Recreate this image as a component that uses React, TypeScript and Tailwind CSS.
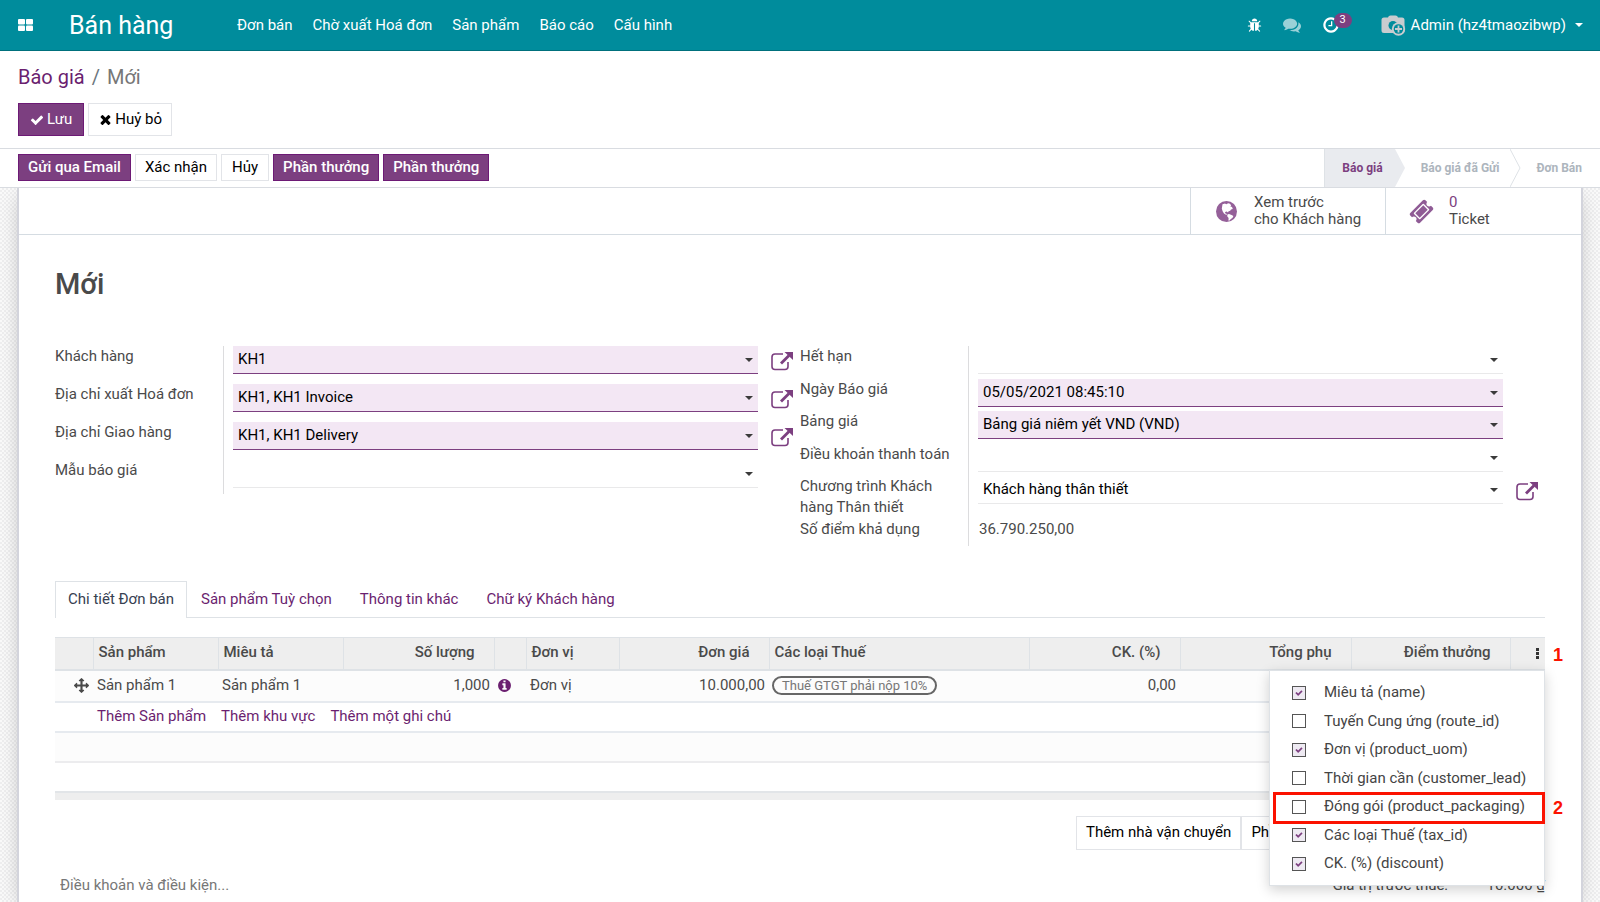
import React from "react";

const ICONS = {
  check:
    "M1671 566q0 40-28 68l-724 724-136 136q-28 28-68 28t-68-28l-136-136-362-362q-28-28-28-68t28-68l136-136q28-28 68-28t68 28l294 295 656-657q28-28 68-28t68 28l136 136q28 28 28 68z",
  times:
    "M1490 1322q0 40-28 68l-136 136q-28 28-68 28t-68-28l-294-294-294 294q-28 28-68 28t-68-28l-136-136q-28-28-28-68t28-68l294-294-294-294q-28-28-28-68t28-68l136-136q28-28 68-28t68 28l294 294 294-294q28-28 68-28t68 28l136 136q28 28 28 68t-28 68l-294 294 294 294q28 28 28 68z",
  info: "M1152 1376v-160q0-14-9-23t-23-9h-96v-512q0-14-9-23t-23-9h-320q-14 0-23 9t-9 23v160q0 14 9 23t23 9h96v320h-96q-14 0-23 9t-9 23v160q0 14 9 23t23 9h448q14 0 23-9t9-23zm-128-896v-160q0-14-9-23t-23-9h-192q-14 0-23 9t-9 23v160q0 14 9 23t23 9h192q14 0 23-9t9-23zm640 416q0 209-103 385.5t-279.5 279.5-385.5 103-385.5-103-279.5-279.5-103-385.5 103-385.5 279.5-279.5 385.5-103 385.5 103 279.5 279.5 103 385.5z",
  clock:
    "M1024 544v448q0 14-9 23t-23 9h-320q-14 0-23-9t-9-23v-64q0-14 9-23t23-9h224v-352q0-14 9-23t23-9h64q14 0 23 9t9 23zm416 352q0-148-73-273t-198-198-273-73-273 73-198 198-73 273 73 273 198 198 273 73 273-73 198-198 73-273zm224 0q0 209-103 385.5t-279.5 279.5-385.5 103-385.5-103-279.5-279.5-103-385.5 103-385.5 279.5-279.5 385.5-103 385.5 103 279.5 279.5 103 385.5z",
  comments:
    "M1408 768q0 139-94 257t-256.5 186.5-353.5 68.5q-86 0-176-16-124 88-278 128-36 9-86 16h-3q-11 0-20.5-8t-11.5-21q-1-3-1-6.5t.5-6.5 2-6l2.5-5 3.5-5.5 4-5 4.5-5 4-4.5q5-6 23-25t26-29.5 22.5-29 25-38.5 20.5-44q-124-72-195-177t-71-224q0-139 94-257t256.500-186.500 353.500-68.500 353.500 68.500 256.500 186.500 94 257zm384 256q0 120-71 224.500t-195 176.500q10 24 20.500 44t25 38.500 22.500 29 26 29.500 23 25q1 1 4 4.500t4.500 5 4 5 3.500 5.500l2.500 5 2 6 .5 6.500-1 6.500q-3 14-13 22t-22 7q-50-7-86-16-154-40-278-128-90 16-176 16-271 0-472-132 58 4 88 4 161 0 309-45t264-129q125-92 192-212t67-254q0-77-23-152 129 71 204 178t75 230z",
  ticket:
    "M1024 452l316 316-572 572-316-316zm-211 979l618-618q19-19 19-45t-19-45l-362-362q-18-18-45-18t-45 18l-618 618q-19 19-19 45t19 45l362 362q18 18 45 18t45-18zm889-637l-907 908q-37 37-90.5 37t-90.5-37l-126-126q56-56 56-136t-56-136-136-56-136 56l-125-126q-37-37-37-90.5t37-90.5l907-906q37-37 90.5-37t90.5 37l125 125q-56 56-56 136t56 136 136 56 136-56l126 125q37 37 37 90.5t-37 90.5z",
  arrows:
    "M1792 896q0 26-19 45l-256 256q-19 19-45 19t-45-19-19-45v-128h-384v384h128q26 0 45 19t19 45-19 45l-256 256q-19 19-45 19t-45-19l-256-256q-19-19-19-45t19-45 45-19h128v-384h-384v128q0 26-19 45t-45 19-45-19l-256-256q-19-19-19-45t19-45l256-256q19-19 45-19t45 19 19 45v128h384v-384h-128q-26 0-45-19t-19-45 19-45l256-256q19-19 45-19t45 19l256 256q19 19 19 45t-19 45-45 19h-128v384h384v-128q0-26 19-45t45-19 45 19l256 256q19 19 19 45z",
  bug: "M1696 960q0 26-19 45t-45 19h-224q0 171-67 290l208 209q19 19 19 45t-19 45q-18 19-45 19t-45-19l-198-197q-5 5-15 13t-42 28.5-65 36.5-82 29-97 13v-896h-128v896q-51 0-101.5-13.5t-87-33-66-39-43.5-32.5l-15-14-183 207q-20 21-48 21-24 0-43-16-19-18-20.5-44.5t15.5-46.5l202-227q-58-114-58-274h-224q-26 0-45-19t-19-45 19-45 45-19h224v-294l-173-173q-19-19-19-45t19-45 45-19 45 19l173 173h844l173-173q19-19 45-19t45 19 19 45-19 45l-173 173v294h224q26 0 45 19t19 45zm-480-576h-640q0-133 93.5-226.5t226.5-93.5 226.5 93.5 93.5 226.5z",
};

function Icon({ name, className }: { name: keyof typeof ICONS; className: string }) {
  return (
    <svg viewBox="0 0 1792 1792" fill="currentColor" aria-hidden="true" className={`shrink-0 ${className}`}>
      <path d={ICONS[name]} />
    </svg>
  );
}

function Globe() {
  return (
    <svg viewBox="0 0 21 21" aria-hidden="true" className="size-[21px] shrink-0">
      <circle cx="10.500" cy="10.500" r="10.500" fill="#956099" />
      <path
        d="M6.500 3.200 9 2.400l1.200.8 2-.9 1.800.5 1.200 1.700-1 .8 1.800.6.8 2.200-1.800.3-.8 1.300-1.600.6-.6 1.200-1.300-.9-1.500.5-.2 1.200 1.200.3.8 1.200-1-.1-2-1.300-1.400-2.200-.8-2.800z"
        fill="#fff"
      />
      <path d="m11.400 13.600 1.600-.6 2.600.9 1.800 1.200-.8 1.700-2 1.500-1.400 1.400-.8-.3.200-2.400-1.400-1.700z" fill="#fff" />
    </svg>
  );
}

function Caret({ className }: { className: string }) {
  return (
    <svg viewBox="0 0 8 4" fill="currentColor" aria-hidden="true" className={`h-1 w-2 ${className}`}>
      <path d="M0 0h8L4 4z" />
    </svg>
  );
}

function OpenRecord({ label }: { label: string }) {
  return (
    <button type="button" aria-label={label} className="mt-[5px] ml-[13px] text-[#7c3f80]">
      <svg viewBox="0 0 22 20" fill="none" aria-hidden="true" className="h-5 w-[22px]">
        <path
          d="M12 3H4a3 3 0 0 0-3 3v9.500a3 3 0 0 0 3 3h10a3 3 0 0 0 3-3V11"
          stroke="currentColor"
          strokeWidth="1.600"
        />
        <path d="M10 12.500 18 4.500" stroke="currentColor" strokeWidth="2.800" />
        <path d="M13.500 1H22v8z" fill="currentColor" />
      </svg>
    </button>
  );
}

type FieldProps = { id: string; value?: string; required?: boolean; open?: boolean };

function Field({ id, value = "", required = false, open = false }: FieldProps) {
  return (
    <div className="flex items-start">
      <div
        className={`relative flex h-7 flex-1 items-center border-b ${
          required ? "border-[#7c3f80] bg-[#f3e7f4]" : "border-[#e9e9ea]"
        }`}
      >
        <input
          id={id}
          defaultValue={value}
          className="h-full w-full bg-transparent pr-6 pb-[2px] pl-[5px] text-black outline-none"
        />
        <Caret className="absolute right-[5px] text-[#3b3b3b]" />
      </div>
      <div className="h-7 w-[42px]">{open && <OpenRecord label={`Mở ${value}`} />}</div>
    </div>
  );
}

const customerFields = [
  { id: "customer", label: "Khách hàng", value: "KH1", required: true, open: true },
  { id: "invoice", label: "Địa chỉ xuất Hoá đơn", value: "KH1, KH1 Invoice", required: true, open: true },
  { id: "delivery", label: "Địa chỉ Giao hàng", value: "KH1, KH1 Delivery", required: true, open: true },
  { id: "template", label: "Mẫu báo giá" },
];

const orderFields = [
  { id: "expiry", label: "Hết hạn" },
  { id: "date", label: "Ngày Báo giá", value: "05/05/2021 08:45:10", required: true },
  { id: "pricelist", label: "Bảng giá", value: "Bảng giá niêm yết VND (VND)", required: true },
  { id: "terms", label: "Điều khoản thanh toán" },
  { id: "loyalty", label: "Chương trình Khách hàng Thân thiết", value: "Khách hàng thân thiết", open: true },
];

const columns = [
  { label: "", width: "w-[38px]" },
  { label: "Sản phẩm", width: "w-[125px]" },
  { label: "Miêu tả", width: "w-[125px]" },
  { label: "Số lượng", width: "w-[151px]", right: true },
  { label: "", width: "w-8" },
  { label: "Đơn vị", width: "w-[93px]" },
  { label: "Đơn giá", width: "w-[150px]", right: true },
  { label: "Các loại Thuế", width: "w-[260px]" },
  { label: "CK. (%)", width: "w-[151px]", right: true },
  { label: "Tổng phụ", width: "w-[171px]", right: true },
  { label: "Điểm thưởng", width: "w-[159px]", right: true },
];

const optionalColumns = [
  { label: "Miêu tả (name)", on: true },
  { label: "Tuyến Cung ứng (route_id)", on: false },
  { label: "Đơn vị (product_uom)", on: true },
  { label: "Thời gian cần (customer_lead)", on: false },
  { label: "Đóng gói (product_packaging)", on: false, marked: true },
  { label: "Các loại Thuế (tax_id)", on: true },
  { label: "CK. (%) (discount)", on: true },
];

function Navbar() {
  return (
    <header className="flex h-[51px] items-center border-b border-[#00707c] bg-[#008c9c] pr-[17px] pl-[18px] text-white">
      <button type="button" aria-label="Ứng dụng">
        <svg viewBox="0 0 15 12" fill="currentColor" aria-hidden="true" className="h-3 w-[15px]">
          <rect width="7" height="5.500" rx="1" />
          <rect x="8" width="7" height="5.500" rx="1" />
          <rect y="6.500" width="7" height="5.500" rx="1" />
          <rect x="8" y="6.500" width="7" height="5.500" rx="1" />
        </svg>
      </button>
      <a href="#sales" className="ml-9 w-[168px] pt-[2px] text-[25px]">
        Bán hàng
      </a>
      <nav className="flex gap-5">
        <a href="#orders">Đơn bán</a>
        <a href="#invoice">Chờ xuất Hoá đơn</a>
        <a href="#products">Sản phẩm</a>
        <a href="#reports">Báo cáo</a>
        <a href="#config">Cấu hình</a>
      </nav>
      <div className="ml-auto flex items-center">
        <button type="button" aria-label="Gỡ lỗi">
          <Icon name="bug" className="size-[15px]" />
        </button>
        <button type="button" aria-label="Trò chuyện" className="ml-[21px] opacity-60">
          <Icon name="comments" className="size-[18px]" />
        </button>
        <button type="button" aria-label="Hoạt động" className="relative ml-[21px] w-[38px]">
          <Icon name="clock" className="size-[18px]" />
          <span className="absolute -top-[3px] left-[12px] flex h-[15px] w-[18px] items-center justify-center rounded-full bg-[#7c3f80] text-[11px]">
            3
          </span>
        </button>
        <button type="button" className="ml-[21px] flex items-center">
          <svg viewBox="0 0 25 21" aria-hidden="true" className="h-[21px] w-[25px]">
            <path
              d="M7 2.500Q7.500.500 9.500.500h5q2 0 2.500 2h4q2.500 0 2.500 2.500v10.500q0 2.500-2.500 2.500h-18q-2.500 0-2.500-2.500V5q0-2.500 2.500-2.500z"
              fill="#c9cccf"
            />
            <circle cx="12" cy="10.500" r="4.500" fill="#008c9c" />
            <circle cx="17.500" cy="14" r="6.700" fill="#c9cccf" />
            <circle cx="17.500" cy="14" r="4.800" fill="#008c9c" />
            <path d="M17.500 10.500v7M14 14h7" stroke="#c9cccf" strokeWidth="1.800" />
          </svg>
          <span className="ml-[5px]">Admin (hz4tmaozibwp)</span>
          <Caret className="ml-[9px]" />
        </button>
      </div>
    </header>
  );
}

const primary = "border border-[#6d1a75] bg-[#7c3f80] text-white";
const secondary = "border border-[#e2e4e8] bg-white text-black";

function ControlPanel() {
  return (
    <div className="flex flex-col items-start gap-[11px] px-[18px] pt-[11px] pb-3">
      <nav className="flex h-[30px] items-center gap-[7px] text-[20px]">
        <a href="#quotes" className="text-[#6b1f70]">
          Báo giá
        </a>
        <span className="text-[#6c757d]">/</span>
        <span className="text-[#777]">Mới</span>
      </nav>
      <div className="flex gap-1">
        <button type="button" className={`flex h-[33px] items-center gap-[3px] px-[11px] ${primary}`}>
          <Icon name="check" className="size-[14px]" />
          Lưu
        </button>
        <button type="button" className={`flex h-[33px] items-center gap-[2px] px-[9px] ${secondary}`}>
          <Icon name="times" className="size-[15px]" />
          Huỷ bỏ
        </button>
      </div>
    </div>
  );
}

function Chevron() {
  return (
    <svg viewBox="0 0 11 38" aria-hidden="true" className="h-full w-[11px]">
      <path d="M0 0 10 19 0 38" fill="none" stroke="#dee2e6" />
    </svg>
  );
}

function StatusBar() {
  return (
    <div className="flex h-10 items-center justify-between border-y border-[#d9dce1] pl-[18px]">
      <div className="flex gap-1 pb-[2px]">
        <button type="button" className={`h-[27px] px-[9px] font-medium ${primary}`}>Gửi qua Email</button>
        <button type="button" className={`h-[27px] px-[9px] ${secondary}`}>Xác nhận</button>
        <button type="button" className={`h-[27px] px-[10px] ${secondary}`}>Hủy</button>
        <button type="button" className={`h-[27px] px-[9px] font-medium ${primary}`}>Phần thưởng</button>
        <button type="button" className={`h-[27px] px-[9px] font-medium ${primary}`}>Phần thưởng</button>
      </div>
      <ol className="flex h-full items-stretch text-[12px] font-bold text-[#adb5bd]">
        <li className="flex text-[#7c3f80]">
          <span className="flex items-center border-l border-[#dee2e6] bg-[#e9ebef] pr-3 pl-[17px]">Báo giá</span>
          <svg viewBox="0 0 11 38" aria-hidden="true" className="h-full w-[11px]">
            <path d="M0 0 10 19 0 38" fill="#e9ebef" />
          </svg>
        </li>
        <li className="flex">
          <span className="flex items-center pr-[10px] pl-[15px]">Báo giá đã Gửi</span>
          <Chevron />
        </li>
        <li className="flex items-center pr-[18px] pl-4">Đơn Bán</li>
      </ol>
    </div>
  );
}

function ColumnMenu() {
  return (
    <div className="absolute top-[33px] right-0 z-10 w-[276px] border border-[#dee2e6] bg-white py-[7px] text-[#444] shadow-[0_4px_12px_rgba(0,0,0,0.18)]">
      {optionalColumns.map((c) => (
        <label key={c.label} className="relative flex h-[29px] items-center pl-[22px] even:h-7">
          <span className="relative flex size-[14px] items-center justify-center">
            <input
              type="checkbox"
              defaultChecked={c.on}
              className="peer size-[14px] appearance-none border border-[#555] bg-white checked:bg-[#eeeaf2]"
            />
            <Icon name="check" className="pointer-events-none absolute hidden size-2 text-[#7c3f80] peer-checked:block" />
          </span>
          <span className="ml-[18px]">{c.label}</span>
          {c.marked && <span className="absolute top-0 -right-px left-[3px] h-8 border-[3px] border-[#fb1200]" />}
          {c.marked && (
            <span className="absolute left-[283px] pt-1 font-['Liberation_Sans',sans-serif] text-[18px] font-bold text-[#fb1200]">
              2
            </span>
          )}
        </label>
      ))}
    </div>
  );
}

function OrderLines() {
  return (
    <div className="relative mt-[19px]">
      <table className="w-full table-fixed border-collapse text-left">
        <thead>
          <tr className="h-8 border-t border-b-2 border-[#dee2e6] bg-[#eee]">
            {columns.map((c, i) => (
              <th
                key={i}
                scope="col"
                className={`border-r border-[#dee2e6] pb-[3px] font-medium ${c.width} ${c.right ? "pr-[19px] text-right" : "pl-[5px]"}`}
              >
                {c.label}
              </th>
            ))}
            <th scope="col">
              <button type="button" aria-label="Cột tuỳ chọn" className="ml-auto block px-[6px] text-[#333]">
                <svg viewBox="0 0 3 11" fill="currentColor" aria-hidden="true" className="h-[11px] w-[3px]">
                  <path d="M0 0h3v3H0zM0 4h3v3H0zM0 8h3v3H0z" />
                </svg>
              </button>
            </th>
          </tr>
        </thead>
        <tbody>
          <tr className="h-8 border-b-2 border-[#e6eaef] bg-[#fcfcfc]">
            <td className="pl-[19px]"><Icon name="arrows" className="size-[15px]" /></td>
            <td className="pl-1">Sản phẩm 1</td>
            <td className="pl-1">Sản phẩm 1</td>
            <td className="pr-1 text-right">1,000</td>
            <td className="pl-[3px]"><Icon name="info" className="size-[15px] text-[#6b1f70]" /></td>
            <td className="pl-1">Đơn vị</td>
            <td className="pr-1 text-right">10.000,00</td>
            <td className="pl-[3px]">
              <span className="flex h-[19px] w-fit items-center rounded-full border-2 border-[#666] px-2 text-[13px] text-[#777]">
                Thuế GTGT phải nộp 10%
              </span>
            </td>
            <td className="pr-1 text-right">0,00</td>
            <td colSpan={3} />
          </tr>
          <tr className="h-[30px] border-b-2 border-[#e6eaef]">
            <td />
            <td colSpan={11} className="pl-1">
              <div className="flex gap-[15px] text-[#6b1f70]">
                <a href="#add-product">Thêm Sản phẩm</a>
                <a href="#add-section">Thêm khu vực</a>
                <a href="#add-note">Thêm một ghi chú</a>
              </div>
            </td>
          </tr>
          <tr className="h-[30px] border-b-2 border-[#ececee] bg-[#fcfcfc]"><td colSpan={12} /></tr>
          <tr className="h-[30px] border-b-2 border-[#e2e5e8]"><td colSpan={12} /></tr>
        </tbody>
        <tfoot>
          <tr className="h-2 bg-[#eee]"><td colSpan={12} /></tr>
        </tfoot>
      </table>
      <span className="absolute top-[5px] -right-[18px] font-['Liberation_Sans',sans-serif] text-[18px] font-bold text-[#fb1200]">
        1
      </span>
      <ColumnMenu />
    </div>
  );
}

function Sheet() {
  return (
    <main className="flex-1 overflow-hidden bg-[repeating-conic-gradient(#eeeeef_0_25%,#fafafa_0_50%)] bg-[length:4px_4px] px-[17px]">
      <div className="min-h-full border-x-2 border-[#d3d4dc] bg-white shadow-[0_5px_20px_-5px_rgba(0,0,0,0.28)]">
        <div className="flex h-[47px] justify-end border-b border-[#d5dce2] leading-[17px]">
          <a href="#preview" className="flex w-[195px] items-center gap-[17px] border-l border-[#d5dce2] pl-[25px]">
            <Globe />
            <span>
              Xem trước
              <br />
              cho Khách hàng
            </span>
          </a>
          <a href="#ticket" className="flex w-[196px] items-center gap-[15px] border-l border-[#d5dce2] pl-[23px]">
            <Icon name="ticket" className="size-[25px] text-[#8f5b95]" />
            <span>
              <span className="text-[#7c3f80]">0</span>
              <br />
              Ticket
            </span>
          </a>
        </div>
        <div className="px-9">
          <h1 className="mt-[28px] text-[29px] leading-[42px] font-medium">Mới</h1>
          <div className="mt-[41px] grid grid-cols-2 leading-[21px]">
            <div>
              {customerFields.map((f) => (
                <div key={f.id} className="flex h-[38px] last:h-[34px]">
                  <label htmlFor={f.id} className="w-[169px] border-r border-[#dcdcde]">{f.label}</label>
                  <div className="flex-1 pl-[9px]"><Field {...f} /></div>
                </div>
              ))}
            </div>
            <div>
              {orderFields.map((f) => (
                <div key={f.id} className="flex h-[33px] even:h-8 nth-5:h-[43px]">
                  <label htmlFor={f.id} className="w-[169px] border-r border-[#dcdcde] pr-4">{f.label}</label>
                  <div className="flex-1 pl-[9px]"><Field {...f} /></div>
                </div>
              ))}
              <div className="flex h-[27px]">
                <span className="w-[169px] border-r border-[#dcdcde]">Số điểm khả dụng</span>
                <span className="pl-[10px]">36.790.250,00</span>
              </div>
            </div>
          </div>
          <div role="tablist" className="mt-[35px] flex h-[37px] border-b border-[#dee2e6] text-[#6b1f70]">
            <button type="button" role="tab" aria-selected="true" className="-mb-px border border-b-0 border-[#dee2e6] bg-white px-3 pb-px text-[#374151]">
              Chi tiết Đơn bán
            </button>
            <button type="button" role="tab" className="px-[14px]">Sản phẩm Tuỳ chọn</button>
            <button type="button" role="tab" className="px-[14px]">Thông tin khác</button>
            <button type="button" role="tab" className="px-[14px]">Chữ ký Khách hàng</button>
          </div>
          <OrderLines />
          <div className="mt-4 flex justify-end pr-[198px]">
            <button type="button" className={`h-[34px] px-[9px] ${secondary}`}>Thêm nhà vận chuyển</button>
            <button type="button" className={`h-[34px] px-[9px] ${secondary}`}>Phần thưởng</button>
          </div>
          <div className="mt-[25px] flex justify-between leading-[21px]">
            <input
              aria-label="Điều khoản và điều kiện"
              placeholder="Điều khoản và điều kiện..."
              className="w-[400px] pl-[5px] outline-none placeholder:text-[#777]"
            />
            <dl className="flex">
              <dt>Giá trị trước thuế:</dt>
              <dd className="w-[97px] text-right">10.000 ₫</dd>
            </dl>
          </div>
        </div>
      </div>
    </main>
  );
}

export default function App() {
  return (
    <div className="flex h-screen flex-col overflow-hidden bg-white font-[Roboto,sans-serif] text-[15px] text-[#4a4a4a]">
      <Navbar />
      <ControlPanel />
      <StatusBar />
      <Sheet />
    </div>
  );
}
